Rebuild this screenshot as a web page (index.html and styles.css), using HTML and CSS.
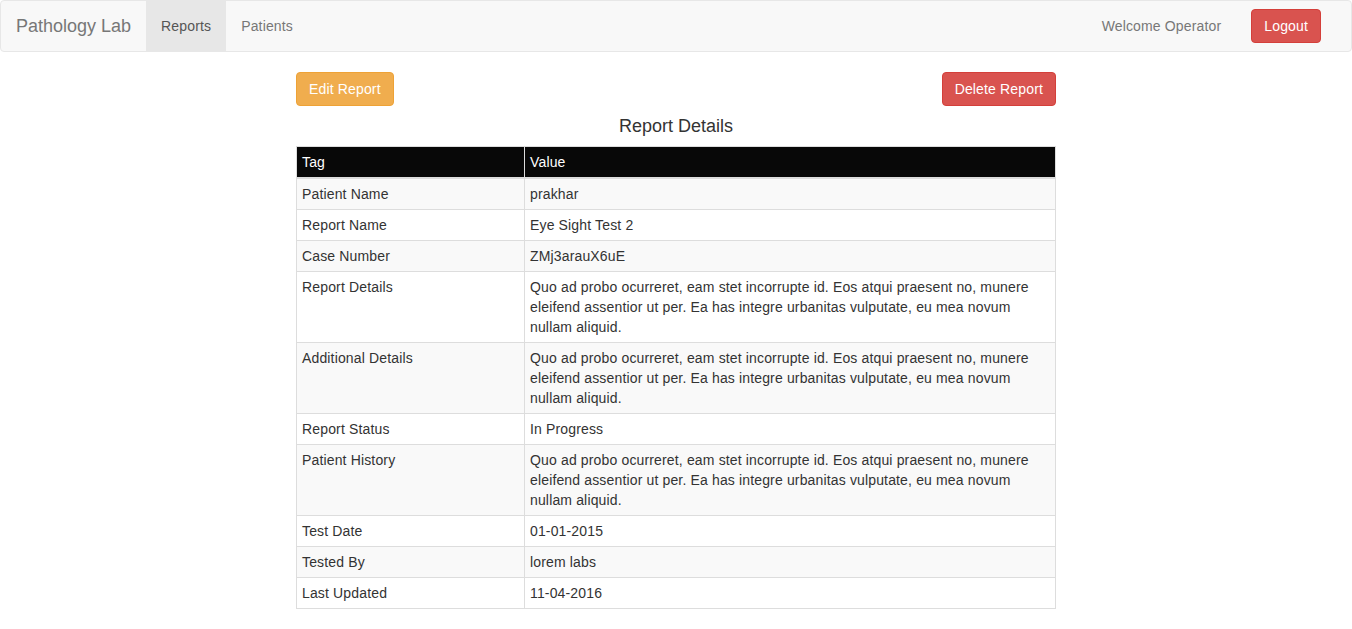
FILE: index.html
```html
<!DOCTYPE html>
<html>
<head>
<meta charset="utf-8">
<title>Pathology Lab</title>
<link rel="stylesheet" href="styles.css">
</head>
<body>
<nav class="navbar">
  <div class="nav-left">
    <a class="brand" href="#">Pathology Lab</a>
    <a class="nav-link active" href="#">Reports</a>
    <a class="nav-link" href="#">Patients</a>
  </div>
  <div class="nav-right">
    <span class="nav-text">Welcome Operator</span>
    <button class="btn btn-danger nav-btn">Logout</button>
  </div>
</nav>
<main class="content">
  <div class="actions">
    <button class="btn btn-warning">Edit Report</button>
    <button class="btn btn-danger">Delete Report</button>
  </div>
  <h4 class="title">Report Details</h4>
  <table class="table">
    <thead>
      <tr><th class="col-tag">Tag</th><th>Value</th></tr>
    </thead>
    <tbody>
      <tr><td>Patient Name</td><td>prakhar</td></tr>
      <tr><td>Report Name</td><td>Eye Sight Test 2</td></tr>
      <tr><td>Case Number</td><td>ZMj3arauX6uE</td></tr>
      <tr><td>Report Details</td><td>Quo ad probo ocurreret, eam stet incorrupte id. Eos atqui praesent no, munere eleifend assentior ut per. Ea has integre urbanitas vulputate, eu mea novum nullam aliquid.</td></tr>
      <tr><td>Additional Details</td><td>Quo ad probo ocurreret, eam stet incorrupte id. Eos atqui praesent no, munere eleifend assentior ut per. Ea has integre urbanitas vulputate, eu mea novum nullam aliquid.</td></tr>
      <tr><td>Report Status</td><td>In Progress</td></tr>
      <tr><td>Patient History</td><td>Quo ad probo ocurreret, eam stet incorrupte id. Eos atqui praesent no, munere eleifend assentior ut per. Ea has integre urbanitas vulputate, eu mea novum nullam aliquid.</td></tr>
      <tr><td>Test Date</td><td>01-01-2015</td></tr>
      <tr><td>Tested By</td><td>lorem labs</td></tr>
      <tr><td>Last Updated</td><td>11-04-2016</td></tr>
    </tbody>
  </table>
</main>
</body>
</html>
```
FILE: styles.css
```css
* { box-sizing: border-box; }
html, body {
  margin: 0;
  padding: 0;
}
body {
  font-family: "Liberation Sans", Arial, sans-serif;
  font-size: 14px;
  line-height: 20px;
  letter-spacing: 0.15px;
  color: #333;
  background: #fff;
}
.navbar {
  display: flex;
  justify-content: space-between;
  align-items: stretch;
  height: 52px;
  margin-bottom: 20px;
  background: #f8f8f8;
  border: 1px solid #e7e7e7;
  border-radius: 4px;
}
.nav-left { display: flex; }
.brand {
  padding: 15px;
  font-size: 18px;
  line-height: 20px;
  letter-spacing: 0;
  color: #777;
  text-decoration: none;
}
.nav-link {
  padding: 15px;
  color: #777;
  text-decoration: none;
}
.nav-link.active {
  background: #e7e7e7;
  color: #555;
}
.nav-right {
  display: flex;
  align-items: flex-start;
  padding-right: 30px;
}
.nav-text {
  margin-top: 15px;
  color: #777;
}
.nav-btn {
  margin-top: 8px;
  margin-left: 30px;
}
.btn {
  display: inline-block;
  padding: 6px 12px;
  font-family: inherit;
  font-size: 14px;
  line-height: 20px;
  letter-spacing: inherit;
  border: 1px solid transparent;
  border-radius: 4px;
  color: #fff;
  cursor: pointer;
}
.btn-danger {
  background: #d9534f;
  border-color: #d43f3a;
}
.btn-warning {
  background: #f0ad4e;
  border-color: #eea236;
}
.content {
  width: 760px;
  margin: 0 auto;
}
.actions {
  display: flex;
  justify-content: space-between;
}
.title {
  margin: 10px 0;
  font-size: 18px;
  font-weight: 500;
  line-height: 20px;
  letter-spacing: 0;
  text-align: center;
}
.table {
  width: 100%;
  border-collapse: collapse;
  border: 1px solid #ddd;
}
.table th,
.table td {
  padding: 5px;
  border: 1px solid #ddd;
  text-align: left;
  vertical-align: top;
  line-height: 20px;
}
.table th {
  background: #080808;
  color: #fff;
  font-weight: normal;
  border-bottom-width: 2px;
}
.col-tag { width: 228px; }
.table tbody tr:nth-child(odd) { background: #f9f9f9; }
```
